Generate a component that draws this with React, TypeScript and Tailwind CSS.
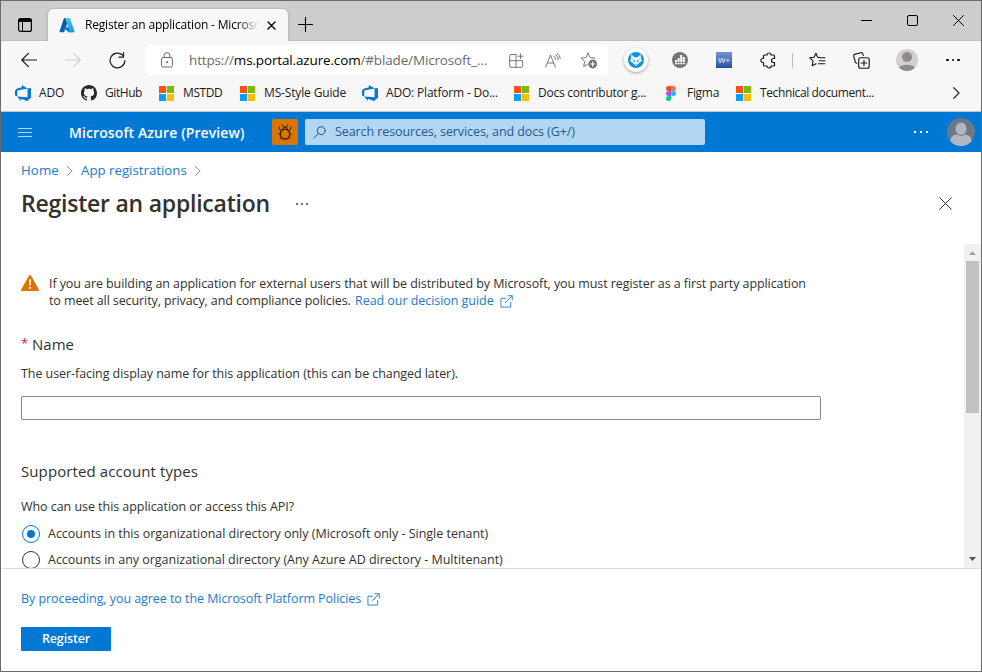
import type { ReactNode } from "react";

type SvgProps = { className?: string; children: ReactNode; box?: string };

function Line({ className = "", children, box = "0 0 16 16" }: SvgProps) {
  return (
    <svg
      viewBox={box}
      className={"shrink-0 " + className}
      fill="none"
      stroke="currentColor"
      strokeLinecap="round"
      strokeLinejoin="round"
    >
      {children}
    </svg>
  );
}

function MicrosoftLogo() {
  return (
    <span className="grid size-[15px] shrink-0 grid-cols-2 gap-px">
      <span className="bg-[#f65314]" />
      <span className="bg-[#7cbb00]" />
      <span className="bg-[#00a1f1]" />
      <span className="bg-[#ffbb00]" />
    </span>
  );
}

function DevOpsLogo() {
  return (
    <svg viewBox="0 0 18 18" className="-mx-px size-[18px] shrink-0" fill="#0078d4">
      <path d="M17 4v9.74l-4 3.28-6.2-2.26V17l-3.51-4.59 10.23.8V4.44zm-3.41.49L7.85 1v2.29L2.58 4.84 1 6.87v4.61l2.26 1V6.57z" />
    </svg>
  );
}

function GitHubLogo() {
  return (
    <svg viewBox="0 0 16 16" className="size-4 shrink-0" fill="#24292f">
      <path d="M8 0C3.58 0 0 3.58 0 8c0 3.54 2.29 6.53 5.47 7.59.4.07.55-.17.55-.38 0-.19-.01-.82-.01-1.49-2.01.37-2.53-.49-2.69-.94-.09-.23-.48-.94-.82-1.13-.28-.15-.68-.52-.01-.53.63-.01 1.08.58 1.23.82.72 1.21 1.87.87 2.33.66.07-.52.28-.87.51-1.07-1.78-.2-3.64-.89-3.64-3.95 0-.87.31-1.59.82-2.15-.08-.2-.36-1.02.08-2.12 0 0 .67-.21 2.2.82.64-.18 1.32-.27 2-.27s1.36.09 2 .27c1.53-1.04 2.2-.82 2.2-.82.44 1.1.16 1.92.08 2.12.51.56.82 1.27.82 2.15 0 3.07-1.87 3.75-3.65 3.95.29.25.54.73.54 1.48 0 1.07-.01 1.93-.01 2.2 0 .21.15.46.55.38A8.01 8.01 0 0 0 16 8c0-4.42-3.58-8-8-8" />
    </svg>
  );
}

function FigmaLogo() {
  return (
    <svg viewBox="0 0 10 15" className="h-[15px] w-[10px] shrink-0">
      <path d="M5 0H2.5a2.5 2.5 0 0 0 0 5H5z" fill="#f24e1e" />
      <path d="M5 0h2.500a2.500 2.500 0 0 1 0 5H5z" fill="#ff7262" />
      <path d="M5 5H2.500a2.500 2.500 0 0 0 0 5H5z" fill="#a259ff" />
      <circle cx="7.500" cy="7.500" r="2.500" fill="#1abcfe" />
      <path d="M5 10H2.500A2.500 2.500 0 1 0 5 12.500z" fill="#0acf83" />
    </svg>
  );
}

function AzureLogo() {
  return (
    <svg viewBox="0 0 96 96" className="size-4 shrink-0">
      <defs>
        <linearGradient id="azLeft" x1="0.6" y1="0" x2="0.3" y2="1">
          <stop offset="0" stopColor="#114a8b" />
          <stop offset="1" stopColor="#0669bc" />
        </linearGradient>
        <linearGradient id="azRight" x1="0.4" y1="0" x2="0.7" y2="1">
          <stop offset="0" stopColor="#3ccbf4" />
          <stop offset="1" stopColor="#2892df" />
        </linearGradient>
      </defs>
      <path
        fill="url(#azLeft)"
        d="M33.3 6.500h26.700L32.300 88.600a4.300 4.300 0 0 1-4 2.900H7.500a4.200 4.200 0 0 1-4-5.600L29.300 9.400a4.300 4.300 0 0 1 4-2.900z"
      />
      <path fill="#0078d4" d="M71.200 61.600H30a1.900 1.900 0 0 0-1.300 3.300l27.200 25.400a4.300 4.300 0 0 0 2.900 1.200h24z" />
      <path
        fill="url(#azRight)"
        d="M66.600 9.400a4.200 4.200 0 0 0-4-2.900H33c1.800 0 3.500 1.200 4 2.900l25.900 76.500a4.200 4.200 0 0 1-4 5.600h29.600a4.200 4.200 0 0 0 4-5.600z"
      />
    </svg>
  );
}

function ExternalLink() {
  return (
    <Line className="mt-px ml-[6px] size-[13px] text-[#2b7cd3]" box="0 0 14 14">
      <path d="M6 3.500H1v9.500h10.500V8M8.500.8h4.700v4.700M13 1 6 8" strokeWidth="1" />
    </Line>
  );
}

function Titlebar() {
  return (
    <div className="flex h-10 shrink-0 border-b border-[#bfbfbf] bg-[#cdcdcd]">
      <Line className="mt-[17px] ml-[17px] size-[14px] text-black" box="0 0 14 14">
        <rect x=".6" y=".6" width="12.800" height="12.800" rx="2" strokeWidth="1.200" />
        <path d="M1 2.500h12" strokeWidth="3" />
        <path d="M4.500 3v10" strokeWidth="1" />
      </Line>
      <div className="mt-2 ml-4 flex h-8 w-60 items-center rounded-t-[5px] bg-[#f7f7f7] pl-[11px] shadow-[0_0_2px_rgba(0,0,0,0.3)]">
        <AzureLogo />
        <span className="ml-[10px] w-[174px] bg-linear-to-r from-black from-88% to-transparent to-100% bg-clip-text text-[12px] tracking-[-0.18px] whitespace-nowrap text-transparent">
          Register an application - Microsc
        </span>
        <Line className="ml-[8px] size-[9px] text-black" box="0 0 9 9">
          <path d="m1 1 7 7M8 1 1 8" strokeWidth="1.400" />
        </Line>
      </div>
      <Line className="mt-[16px] ml-[10px] size-[15px] text-black" box="0 0 15 15">
        <path d="M7.500.5v14M.5 7.500h14" strokeWidth="1.200" />
      </Line>
      <div className="ml-auto flex items-center gap-[35px] pr-[17px] pb-px text-black">
        <Line className="size-[11px]" box="0 0 11 11">
          <path d="M.5 5.500h10" />
        </Line>
        <Line className="size-[11px]" box="0 0 11 11">
          <rect x=".5" y=".5" width="10" height="10" rx="1.500" />
        </Line>
        <Line className="size-[11px]" box="0 0 11 11">
          <path d="m.5.5 10 10m0-10-10 10" />
        </Line>
      </div>
    </div>
  );
}

function Toolbar() {
  return (
    <div className="flex h-[38px] shrink-0 items-center text-[#1b1b1b]">
      <Line className="ml-5 size-4">
        <path d="M15.500 8H.8M7.500 1.300.8 8l6.700 6.700" strokeWidth="1.200" />
      </Line>
      <Line className="ml-7 size-4 text-[#cfcfcf]">
        <path d="M.5 8h14.700M8.500 1.300 15.200 8l-6.700 6.700" strokeWidth="1.200" />
      </Line>
      <Line className="ml-7 size-[17px]" box="0 0 17 17">
        <path d="M15.900 8.500A7.400 7.400 0 1 1 13.500 3M14.500.7v4.500H10" strokeWidth="1.200" />
      </Line>
      <div className="ml-[19px] flex h-[30px] w-[463px] shrink-0 items-center rounded-[4px] bg-white text-[#6b6b6b]">
        <Line className="ml-4 h-4 w-[12px]" box="0 0 12 16">
          <rect x=".6" y="5.500" width="10.800" height="9.500" rx="1.500" />
          <path d="M3.200 5.300V3.500a2.800 2.800 0 0 1 5.600 0v1.800" />
          <circle cx="6" cy="10.200" r=".6" fill="currentColor" />
        </Line>
        <span className="ml-4 w-[298px] text-[13.5px] tracking-[-0.15px] whitespace-nowrap">
          https://<span className="text-black">ms.portal.azure.com</span>/#blade/Microsoft_...
        </span>
        <Line className="ml-[22px] size-[15px] text-[#767676]" box="0 0 15 15">
          <path d="M7 1.500H2A1.200 1.200 0 0 0 .7 2.700V13A1.200 1.200 0 0 0 2 14.300h10.500a1.200 1.200 0 0 0 1.200-1.200V7.700H.7M7 1.500v12.800M11.500.7v5M9 3.200h5" />
        </Line>
        <Line className="ml-[21px] h-[15px] w-4 text-[#767676]" box="0 0 16 15">
          <path d="M.7 14 5.500 2l4.800 12M2.300 10h6.400M9 3.200q1.700 1.300 1.700 3.300M10.800 1.500Q13.600 3.500 13.300 7M12.300.5q3 1.800 3 5" />
        </Line>
        <Line className="ml-[19px] h-[17px] w-[18px] text-[#767676]" box="0 0 18 17">
          <path d="M8 1 10 5.500l4.900.6M8 1 6 5.500l-4.900.6 3.600 3.300-1 5 3.600-2" />
          <circle cx="12.700" cy="12" r="4.400" fill="#707070" stroke="none" />
          <path d="M12.700 9.800v4.400M10.500 12h4.400" stroke="white" strokeWidth="1.200" />
        </Line>
      </div>
      <span className="ml-4 flex size-6 shrink-0 items-center justify-center rounded-full bg-white shadow-[0_1px_3px_rgba(0,0,0,0.35)]">
        <svg viewBox="0 0 16 16" className="size-4">
          <circle cx="8" cy="8" r="8" fill="#1593d5" />
          <path d="M3.300 2.200 6.300 5.200h3.400l3-3 .3 4.300 1 2.500-2.300 1.500L8 14l-3.700-3.500L2 9l1-2.500z" fill="#e4f3fb" />
          <path d="m4.300 7.200 2.900 1.900-.5 1.300zM11.700 7.200 8.800 9.100l.5 1.300zM7.200 12h1.600L8 13.200z" fill="#1593d5" />
        </svg>
      </span>
      <svg viewBox="0 0 16 16" className="ml-6 size-4 shrink-0">
        <circle cx="8" cy="8" r="8" fill="#757575" />
        <path d="M3 8h2v2H3zM5.600 6h2v4h-2zM8.200 3h2v7h-2zM10.800 5h2v5h-2zM3 10.700h2v1.500H3zM5.600 10.700h2v1.500h-2zM8.200 10.700h2v1.500h-2zM10.800 10.700h2v1.500h-2z" fill="white" />
      </svg>
      <span className="ml-7 flex size-4 shrink-0 items-center justify-center bg-linear-to-b from-[#6f93d6] to-[#2c51a0] text-[8px] text-white">
        W+
      </span>
      <Line className="ml-[28px] size-[17px]" box="0 0 17 17">
        <path d="M4.500 3H7a2 2 0 0 1 4 0h2.500a1 1 0 0 1 1 1v2.500h-1a2 2 0 0 0 0 4h1V13a1 1 0 0 1-1 1H11a2 2 0 0 1-4 0H4.500a1 1 0 0 1-1-1v-2.500h-.6a2 2 0 0 1 0-4h.6V4a1 1 0 0 1 1-1z" strokeWidth="1.200" />
      </Line>
      <span className="ml-[15px] h-[15px] w-px bg-[#bdbdbd]" />
      <Line className="ml-4 h-4 w-[17px]" box="0 0 17 16">
        <path
          d="M10.800 5.600 8.700 5.300 6.900 1.300 5.100 5.300.8 5.800 4 8.900l-.8 4.800L7 11.700M10.300 5.700H16M10.300 8.700H16M9.500 11.700H16"
          strokeWidth="1.150"
        />
      </Line>
      <Line className="ml-[27px] size-[17px]" box="0 0 17 17">
        <g strokeWidth="1.150">
          <rect x="5.700" y="5.700" width="10.500" height="10.500" rx="2" />
          <path d="M11 8.200v5.500M8.200 11h5.500M3.800 11.300A2 2 0 0 1 2.300 10L.8 4.500A2 2 0 0 1 2.200 2.100L7.600.8A2 2 0 0 1 10 2.200l.4 1.300" />
        </g>
      </Line>
      <svg viewBox="0 0 22 22" className="ml-[26px] size-[22px] shrink-0">
        <circle cx="11" cy="11" r="11" fill="#d2d0ce" />
        <circle cx="11" cy="8" r="5" fill="#8f8b88" />
        <path d="M3 18.500a8.800 4.500 0 0 1 16 0A11 11 0 0 1 3 18.500z" fill="#8f8b88" />
      </svg>
      <span className="ml-7 flex gap-[3px]">
        <span className="size-[2.500px] rounded-full bg-black" />
        <span className="size-[2.500px] rounded-full bg-black" />
        <span className="size-[2.500px] rounded-full bg-black" />
      </span>
    </div>
  );
}

function Bookmark({ icon, label, className }: { icon: ReactNode; label: string; className: string }) {
  return (
    <div className="flex shrink-0 items-center">
      {icon}
      <span className={"text-[12px] whitespace-nowrap text-[#1b1b1b] " + className}>{label}</span>
    </div>
  );
}

function Bookmarks() {
  return (
    <div className="flex h-8 shrink-0 items-center pb-1 pl-[14px]">
      <Bookmark icon={<DevOpsLogo />} label="ADO" className="ml-[8px] w-[42px] tracking-[-0.2px]" />
      <Bookmark icon={<GitHubLogo />} label="GitHub" className="ml-[8px] w-[54px] tracking-[-0.43px]" />
      <Bookmark icon={<MicrosoftLogo />} label="MSTDD" className="ml-[9px] w-[57px] tracking-[-0.4px]" />
      <Bookmark icon={<MicrosoftLogo />} label="MS-Style Guide" className="ml-[9px] w-[98px] tracking-[-0.15px]" />
      <Bookmark icon={<DevOpsLogo />} label="ADO: Platform - Do..." className="ml-[8px] w-[128px] tracking-[-0.18px]" />
      <Bookmark icon={<MicrosoftLogo />} label="Docs contributor g..." className="ml-[9px] w-[128px] tracking-[-0.25px]" />
      <Bookmark icon={<FigmaLogo />} label="Figma" className="ml-[11px] w-[49px] tracking-[-0.3px]" />
      <Bookmark icon={<MicrosoftLogo />} label="Technical document..." className="ml-[9px] w-[114px] tracking-[-0.38px]" />
      <Line className="mr-[21px] ml-auto h-[12px] w-[7px] text-[#333333]" box="0 0 7 12">
        <path d="m.8.8 5.200 5.200-5.200 5.200" strokeWidth="1.300" />
      </Line>
    </div>
  );
}

function AzureHeader() {
  return (
    <div className="flex h-10 shrink-0 items-center bg-[#0078d4] text-white">
      <span className="ml-[17px] flex w-[14px] flex-col gap-[3px]">
        <span className="h-px bg-[#b3d6f2]" />
        <span className="h-px bg-[#b3d6f2]" />
        <span className="h-px bg-[#b3d6f2]" />
      </span>
      <span className="ml-[37px] w-[203px] text-[14px] font-semibold tracking-[0.1px] whitespace-nowrap">
        Microsoft Azure (Preview)
      </span>
      <span className="flex size-[26px] shrink-0 items-center justify-center rounded-[2px] bg-[#db7500]">
        <Line className="h-4 w-[14px] text-[#2b1a05]" box="0 0 14 16">
          <ellipse cx="7" cy="10.200" rx="4.700" ry="5" strokeWidth="1.200" />
          <path d="M4.500 5.800C4.500 3.800 5.500 3.200 7 3.200s2.500.6 2.500 2.600M5.500 3.200 4.500 1M8.500 3.200l1-2.200M3.800 6.500 1.500 5.300 1.300 3M10.200 6.500l2.300-1.200.2-2.300M2.300 10H.8M11.700 10h1.500M3.300 13.500l-1.300 1.300M10.700 13.500l1.300 1.300" />
        </Line>
      </span>
      <div className="ml-[7px] flex h-[26px] w-[400px] shrink-0 items-center rounded-[2px] bg-[#b3d6f2] text-[#1f5a94]">
        <Line className="ml-2 size-[13px]" box="0 0 13 13">
          <circle cx="8.200" cy="4.700" r="4" />
          <path d="M5.300 7.600.7 12.200" />
        </Line>
        <span className="ml-[9px] pt-px text-[12.5px] tracking-[-0.09px] whitespace-nowrap">
          Search resources, services, and docs (G+/)
        </span>
      </div>
      <span className="ml-auto flex gap-1">
        <span className="size-[2px] bg-white" />
        <span className="size-[2px] bg-white" />
        <span className="size-[2px] bg-white" />
      </span>
      <svg viewBox="0 0 28 28" className="mr-[6px] ml-[19px] size-7 shrink-0">
        <defs>
          <clipPath id="userClip">
            <circle cx="14" cy="14" r="14" />
          </clipPath>
        </defs>
        <g clipPath="url(#userClip)">
          <rect width="28" height="28" fill="#69798a" />
          <path d="M3.500 28v-5c0-4.500 3.500-6.500 7-6.500h7c3.500 0 7 2 7 6.500v5z" fill="#b3b8be" />
          <ellipse cx="14" cy="10.700" rx="6" ry="6.700" fill="#b3b8be" stroke="#69798a" strokeWidth="1" />
        </g>
      </svg>
    </div>
  );
}

function Chevron() {
  return (
    <Line className="h-[10px] w-[6px] text-[#8a8a8a]" box="0 0 6 10">
      <path d="m.7.7 4.500 4.300L.7 9.300" />
    </Line>
  );
}

function BladeHeader() {
  return (
    <div className="h-[92px] shrink-0">
      <div className="flex h-[37px] items-center pl-5 text-[13.3px] text-[#1a7ad0]">
        <span className="w-[46px] tracking-[0.05px]">Home</span>
        <Chevron />
        <span className="ml-2 w-[114px] tracking-[-0.02px] whitespace-nowrap">App registrations</span>
        <Chevron />
      </div>
      <div className="flex h-[29px] items-center pl-5">
        <h1 className="w-[275px] pb-px text-[23px] font-semibold tracking-[-0.23px] whitespace-nowrap text-[#323130]">
          Register an application
        </h1>
        <span className="flex gap-[3px]">
          <span className="size-[2px] bg-[#767676]" />
          <span className="size-[2px] bg-[#767676]" />
          <span className="size-[2px] bg-[#767676]" />
        </span>
        <Line className="mr-[29px] ml-auto size-[13px] text-[#323130]" box="0 0 13 13">
          <path d="m.7.7 11.600 11.600m0-11.600L.7 12.300" />
        </Line>
      </div>
    </div>
  );
}

function Radio({ checked, label, className }: { checked?: boolean; label: string; className: string }) {
  return (
    <div className="flex h-[26px] items-center pl-px">
      <span
        className={
          "flex size-[18px] shrink-0 items-center justify-center rounded-full border " +
          (checked ? "border-[#0078d4]" : "border-[#323130]")
        }
      >
        {checked && <span className="size-2 rounded-full bg-[#0078d4]" />}
      </span>
      <span className={"ml-2 pt-px whitespace-nowrap " + className}>{label}</span>
    </div>
  );
}

function Form() {
  return (
    <div className="flex h-[324px] shrink-0 overflow-hidden">
      <div className="flex-1 pt-[31px] pl-5">
        <div className="flex">
          <svg viewBox="0 0 18 16" className="h-4 w-[18px] shrink-0">
            <path d="M8 .6q1-1.200 2 0l7.800 14q.4 1.400-1 1.400H1.200q-1.400 0-1-1.400z" fill="#db7500" />
            <path d="M8 4.500h2l-.3 6H8.300z" fill="white" />
            <circle cx="9" cy="12.800" r="1.100" fill="white" />
          </svg>
          <div className="ml-[10px] leading-[17px] whitespace-nowrap">
            <div className="tracking-[-0.084px]">
              If you are building an application for external users that will be distributed by Microsoft, you must
              register as a first party application
            </div>
            <div className="flex items-center">
              <span className="w-[306px] tracking-[-0.1px]">
                to meet all security, privacy, and compliance policies.
              </span>
              <span className="tracking-[-0.05px] text-[#1a7ad0]">Read our decision guide</span>
              <ExternalLink />
            </div>
          </div>
        </div>
        <div className="mt-[25px] flex h-5 items-center text-[15px]">
          <span className="w-[11px] text-[13px] text-[#e3122d]">*</span>
          <span>Name</span>
        </div>
        <div className="mt-[10px] h-5 leading-5 tracking-[-0.06px]">
          The user-facing display name for this application (this can be changed later).
        </div>
        <input className="mt-[12px] block h-6 w-[800px] rounded-[2px] border border-[#8a8886] bg-white px-2 outline-none" />
        <div className="mt-[41px] h-5 text-[15px] leading-5 tracking-[0.1px]">Supported account types</div>
        <div className="mt-[16px] mb-[4px] h-5 leading-5 tracking-[-0.05px]">
          Who can use this application or access this API?
        </div>
        <Radio
          checked
          label="Accounts in this organizational directory only (Microsoft only - Single tenant)"
          className="tracking-[-0.015px]"
        />
        <Radio
          label="Accounts in any organizational directory (Any Azure AD directory - Multitenant)"
          className="tracking-[-0.02px]"
        />
      </div>
      <div className="flex w-[17px] shrink-0 flex-col items-center bg-[#f1f1f1]">
        <svg viewBox="0 0 7 4" className="mt-[7px] h-1 w-[7px]" fill="#a3a3a3">
          <path d="M3.500 0 7 4H0z" />
        </svg>
        <div className="mt-[6px] h-[152px] w-[13px] bg-[#c1c1c1]" />
        <svg viewBox="0 0 7 4" className="mt-auto mb-[7px] h-1 w-[7px]" fill="#505050">
          <path d="M3.500 4 7 0H0z" />
        </svg>
      </div>
    </div>
  );
}

export default function App() {
  return (
    <div className="flex h-[672px] w-[982px] flex-col overflow-hidden border border-[#696a6c] bg-white font-['Open_Sans',sans-serif] text-[12.5px] text-[#323130]">
      <Titlebar />
      <div className="flex h-[71px] shrink-0 flex-col border-b border-[#c4c4c4] bg-[#f7f7f7]">
        <Toolbar />
        <Bookmarks />
      </div>
      <AzureHeader />
      <BladeHeader />
      <Form />
      <div className="flex-1 border-t border-[#dcdcdc] pl-5">
        <div className="mt-[20px] flex h-5 items-center text-[#1a7ad0]">
          <span className="tracking-[-0.06px]">By proceeding, you agree to the Microsoft Platform Policies</span>
          <ExternalLink />
        </div>
        <button className="mt-[18px] flex h-6 w-[90px] items-center justify-center rounded-[1px] bg-[#0078d4] font-semibold tracking-[-0.15px] text-white">
          Register
        </button>
      </div>
    </div>
  );
}
